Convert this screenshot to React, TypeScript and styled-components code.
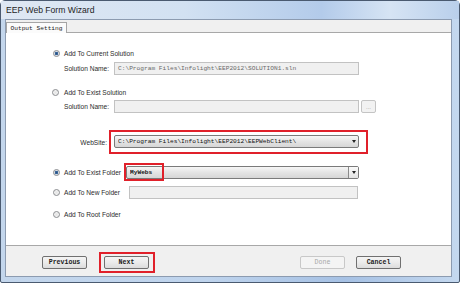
import React from "react";
import styled, { createGlobalStyle } from "styled-components";

const GlobalStyle = createGlobalStyle`
  html, body { margin: 0; padding: 0; background: #ffffff; }
  body { width: 460px; height: 283px; overflow: hidden; }
`;

const mono = `"Liberation Mono", "DejaVu Sans Mono", monospace`;
const sans = `"Liberation Sans", Arial, sans-serif`;

const Window = styled.div`
  width: 460px;
  height: 283px;
  box-sizing: border-box;
  display: flex;
  flex-direction: column;
  border: 1px solid #4a5a70;
  border-radius: 5px 5px 2px 2px;
  background: linear-gradient(to right, #c3d6ec 0%, #bfd4ed 45%, #a6c1e4 75%, #c4d8ef 100%);
  padding-bottom: 5px;
`;

const TitleBar = styled.div`
  height: 18px;
  display: flex;
  align-items: center;
  padding-left: 5px;
  font-family: ${sans};
  font-size: 8.6px;
  color: #1e1e1e;
  background: linear-gradient(to right, #dfe8f3 0%, #d2e1f2 40%, #b3cbea 70%, #d6e4f4 85%, #b9cfeb 100%);
`;

const Client = styled.div`
  flex: 1;
  display: flex;
  flex-direction: column;
  margin: 0 7px 0 4px;
  background: #f0f0f0;
  border: 1px solid #8c9bb0;
`;

const TabStrip = styled.div`
  height: 12px;
  display: flex;
  align-items: flex-end;
  background: #f0f0f0;
`;

const Tab = styled.div`
  height: 11px;
  width: 61px;
  box-sizing: border-box;
  display: flex;
  align-items: center;
  justify-content: center;
  background: #fbfbfb;
  border: 1px solid #a5a5a5;
  border-bottom: none;
  font-family: ${mono};
  font-size: 6.2px;
  color: #222;
  margin-bottom: -1px;
  position: relative;
  z-index: 1;
`;

const Panel = styled.div`
  height: 214px;
  box-sizing: border-box;
  background: #ffffff;
  border: 1px solid #a8a8a8;
  border-right: none;
  border-left: none;
  padding-left: 46px;
  display: flex;
  flex-direction: column;
`;

const Row = styled.div<{ $h: number; $mt: number }>`
  height: ${(p) => p.$h}px;
  margin-top: ${(p) => p.$mt}px;
  display: flex;
  align-items: center;
  position: relative;
`;

const Radio = styled.span<{ $checked?: boolean; $dx?: number }>`
  width: 7px;
  height: 7px;
  box-sizing: border-box;
  border-radius: 50%;
  border: 1px solid #8a8c8f;
  margin-left: ${(p) => p.$dx ?? 0}px;
  flex: none;
  background: ${(p) =>
    p.$checked
      ? "radial-gradient(circle, #2a4e7c 0, #3b6aa0 1.4px, #d8dde4 2px, #f4f4f4 3px)"
      : "radial-gradient(circle, #e4e4e4 0, #f6f6f6 3px)"};
`;

const RadioText = styled.span<{ $w?: number }>`
  font-family: ${sans};
  font-size: 6.6px;
  color: #2a2a2a;
  margin-left: 4px;
  width: ${(p) => (p.$w ? `${p.$w}px` : "auto")};
  white-space: nowrap;
  flex: none;
`;

const FieldLabel = styled.span<{ $w: number; $ml?: number; $right?: boolean }>`
  font-family: ${sans};
  font-size: 6.6px;
  color: #2a2a2a;
  width: ${(p) => p.$w}px;
  margin-left: ${(p) => p.$ml ?? 0}px;
  text-align: ${(p) => (p.$right ? "right" : "left")};
  white-space: nowrap;
  flex: none;
`;

const TextBox = styled.div<{ $w: number; $ml?: number }>`
  width: ${(p) => p.$w}px;
  height: 13px;
  margin-left: ${(p) => p.$ml ?? 0}px;
  box-sizing: border-box;
  border: 1px solid #c2c2c2;
  background: #f0f0f0;
  display: flex;
  align-items: center;
  padding-left: 3px;
  font-family: ${mono};
  font-size: 6.2px;
  color: #6a6a6a;
  white-space: nowrap;
  overflow: hidden;
  flex: none;
`;

const SmallButton = styled.div`
  width: 15px;
  height: 13px;
  margin-left: 2px;
  box-sizing: border-box;
  border: 1px solid #c4c4c4;
  border-radius: 2px;
  background: #f2f2f2;
  display: flex;
  align-items: center;
  justify-content: center;
  font-family: ${sans};
  font-size: 6px;
  color: #9a9a9a;
  line-height: 1;
`;

const Highlight = styled.div`
  border: 2px solid #e0202a;
  padding: 3px 7px 4px 3px;
  margin-left: 2px;
  display: flex;
`;

const Combo = styled.div<{ $w: number; $ml?: number }>`
  width: ${(p) => p.$w}px;
  height: 13px;
  margin-left: ${(p) => p.$ml ?? 0}px;
  box-sizing: border-box;
  border: 1px solid #7a7a7a;
  border-radius: 2px;
  background: linear-gradient(#f6f6f6, #e4e4e4 50%, #d6d6d6);
  display: flex;
  align-items: center;
  padding-left: 3px;
  font-family: ${mono};
  font-size: 6.2px;
  color: #111;
  white-space: nowrap;
  flex: none;
`;

const ComboText = styled.span<{ $bold?: boolean }>`
  flex: 1;
  overflow: hidden;
  font-weight: ${(p) => (p.$bold ? "bold" : "normal")};
`;

const Arrow = styled.span<{ $boxed?: boolean }>`
  width: ${(p) => (p.$boxed ? 10 : 9)}px;
  height: 100%;
  box-sizing: border-box;
  display: flex;
  align-items: center;
  justify-content: center;
  border-left: ${(p) => (p.$boxed ? "1px solid #8a8a8a" : "none")};
  background: ${(p) => (p.$boxed ? "linear-gradient(#fafafa, #e2e2e2)" : "transparent")};
  &::after {
    content: "";
    border-left: 2.5px solid transparent;
    border-right: 2.5px solid transparent;
    border-top: 3px solid #222;
  }
`;

const FolderMark = styled.div`
  position: absolute;
  left: 72px;
  top: 0;
  width: 40px;
  height: 18px;
  box-sizing: border-box;
  border: 2px solid #e0202a;
  pointer-events: none;
`;

const ButtonBar = styled.div`
  flex: 1;
  display: flex;
  align-items: center;
  padding: 2px 50px 0 36px;
  background: #f0f0f0;
`;

const Button = styled.div<{ $disabled?: boolean }>`
  width: 45px;
  height: 13px;
  box-sizing: border-box;
  border: 1px solid ${(p) => (p.$disabled ? "#c8c8c8" : "#707070")};
  border-radius: 2px;
  background: ${(p) =>
    p.$disabled ? "#f4f4f4" : "linear-gradient(#f4f4f4, #ebebeb 50%, #dcdcdc)"};
  display: flex;
  align-items: center;
  justify-content: center;
  font-family: ${mono};
  font-size: 6.6px;
  font-weight: ${(p) => (p.$disabled ? "normal" : "bold")};
  color: ${(p) => (p.$disabled ? "#a8a8a8" : "#1a1a1a")};
`;

const ButtonMark = styled.div`
  margin-left: 12px;
  border: 2px solid #e0202a;
  padding: 2px 4px 2px 3px;
  display: flex;
`;

const Spacer = styled.div`
  flex: 1;
`;

const Gap = styled.div<{ $w: number }>`
  width: ${(p) => p.$w}px;
`;

export default function App() {
  return (
    <>
      <GlobalStyle />
      <Window>
        <TitleBar>EEP Web Form Wizard</TitleBar>
        <Client>
          <TabStrip>
            <Tab>Output Setting</Tab>
          </TabStrip>
          <Panel>
            <Row $h={11} $mt={15}>
              <Radio $checked $dx={1} />
              <RadioText>Add To Current Solution</RadioText>
            </Row>
            <Row $h={13} $mt={3}>
              <FieldLabel $w={50} $ml={12}>
                Solution Name:
              </FieldLabel>
              <TextBox $w={245}>C:\Program Files\Infolight\EEP2012\SOLUTION1.sln</TextBox>
            </Row>
            <Row $h={11} $mt={12}>
              <Radio $dx={0} />
              <RadioText style={{ marginLeft: 5 }}>Add To Exist Solution</RadioText>
            </Row>
            <Row $h={13} $mt={2}>
              <FieldLabel $w={50} $ml={12}>
                Solution Name:
              </FieldLabel>
              <TextBox $w={245} />
              <SmallButton>...</SmallButton>
            </Row>
            <Row $h={24} $mt={17}>
              <FieldLabel $w={55} $right>
                WebSite:
              </FieldLabel>
              <Highlight>
                <Combo $w={245}>
                  <ComboText>C:\Program Files\Infolight\EEP2012\EEPWebClient\</ComboText>
                  <Arrow />
                </Combo>
              </Highlight>
            </Row>
            <Row $h={18} $mt={9}>
              <Radio $checked $dx={1} />
              <RadioText $w={62}>Add To Exist Folder</RadioText>
              <Combo $w={233}>
                <ComboText $bold>MyWebs</ComboText>
                <Arrow $boxed />
              </Combo>
              <FolderMark />
            </Row>
            <Row $h={13} $mt={5}>
              <Radio $dx={1} />
              <RadioText $w={65}>Add To New Folder</RadioText>
              <TextBox $w={229} />
            </Row>
            <Row $h={11} $mt={10}>
              <Radio $dx={1} />
              <RadioText>Add To Root Folder</RadioText>
            </Row>
          </Panel>
          <ButtonBar>
            <Button>Previous</Button>
            <ButtonMark>
              <Button>Next</Button>
            </ButtonMark>
            <Spacer />
            <Button $disabled>Done</Button>
            <Gap $w={11} />
            <Button>Cancel</Button>
          </ButtonBar>
        </Client>
      </Window>
    </>
  );
}
